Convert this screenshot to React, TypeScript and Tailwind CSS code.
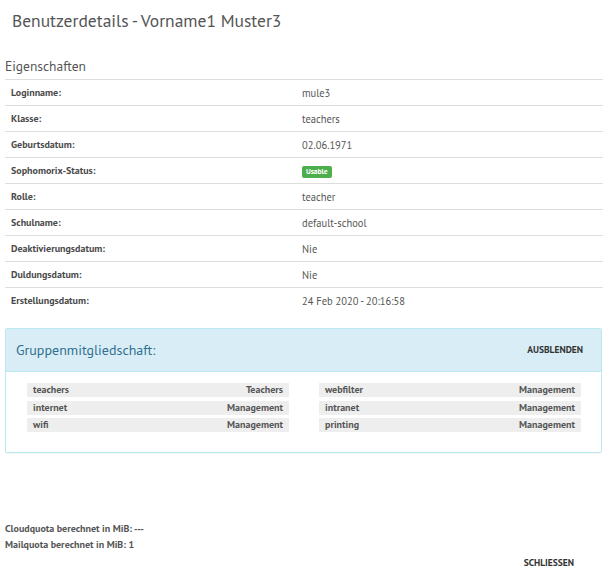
import React from "react"

const rows: [string, React.ReactNode][] = [
  ["Loginname:", "mule3"],
  ["Klasse:", "teachers"],
  ["Geburtsdatum:", "02.06.1971"],
  ["Sophomorix-Status:", "badge"],
  ["Rolle:", "teacher"],
  ["Schulname:", "default-school"],
  ["Deaktivierungsdatum:", "Nie"],
  ["Duldungsdatum:", "Nie"],
  ["Erstellungsdatum:", "24 Feb 2020 - 20:16:58"],
]

const groups: [string, string][] = [
  ["teachers", "Teachers"],
  ["webfilter", "Management"],
  ["internet", "Management"],
  ["intranet", "Management"],
  ["wifi", "Management"],
  ["printing", "Management"],
]

export default function App() {
  return (
    <div className="w-[610px] min-h-[581px] bg-white text-[#555] font-[family-name:'PT_Sans','Liberation_Sans_Narrow','Liberation_Sans',sans-serif]">
      {/* header */}
      <div className="h-[42px] pl-[12px] flex items-center text-[17.5px] leading-[22px] text-[#555]">
        Benutzerdetails - Vorname1 Muster3
      </div>

      <div className="px-[5px]">
        <div className="h-[37px] flex items-end pb-[5px] text-[13.5px] leading-[16px] text-[#555]">
          Eigenschaften
        </div>

        {/* properties */}
        <div className="w-[598px]">
          {rows.map(([label, value]) => (
            <div key={label} className="h-[26px] border-t border-[#ddd] grid grid-cols-[291px_1fr] items-center text-[10px] leading-[14px]">
              <div className="pl-[6px] font-bold text-[#4a4a4a]">{label}</div>
              <div className="pl-[6px] text-[10.5px] text-[#555]">
                {value === "badge" ? (
                  <span className="inline-flex items-center h-[12px] px-[4px] rounded-[2px] bg-[#4cae4c] text-white text-[7.5px] font-bold leading-none">
                    Usable
                  </span>
                ) : (
                  value
                )}
              </div>
            </div>
          ))}
        </div>

        {/* group panel */}
        <div className="mt-[15px] w-[597px] border border-[#bce8f1] rounded-[2px] shadow-[0_1px_1px_rgba(0,0,0,0.05)]">
          <div className="h-[43px] bg-[#d9edf7] border-b border-[#bce8f1] flex items-center justify-between pl-[10px] pr-[18px]">
            <span className="text-[14px] leading-[18px] text-[#31708f]">Gruppenmitgliedschaft:</span>
            <span className="text-[9.5px] font-bold text-[#333]">AUSBLENDEN</span>
          </div>
          <div className="pt-[11px] pb-[20px] pl-[21px] pr-[20px]">
            <div className="grid grid-cols-[262px_262px] gap-x-[30px] gap-y-[3.5px]">
              {groups.map(([name, type]) => (
                <div key={name} className="h-[14px] bg-[#eee] flex items-center justify-between px-[6px] text-[10px] leading-[14px] font-bold text-[#555]">
                  <span>{name}</span>
                  <span>{type}</span>
                </div>
              ))}
            </div>
          </div>
        </div>

        {/* quotas */}
        <div className="mt-[68px] text-[10px] leading-[16px] font-bold text-[#555]">
          <div>Cloudquota berechnet in MiB: ---</div>
          <div>Mailquota berechnet in MiB: 1</div>
        </div>
      </div>

      <div className="flex justify-end pr-[36px] mt-[2px] pb-[10px]">
        <span className="text-[9.5px] leading-[16px] font-bold text-[#333]">SCHLIESSEN</span>
      </div>
    </div>
  )
}
